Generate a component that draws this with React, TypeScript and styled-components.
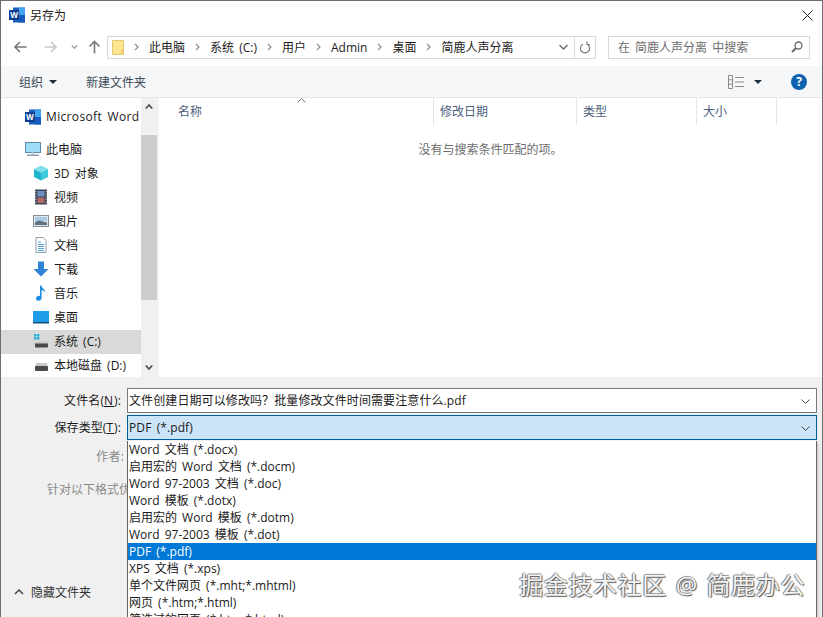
import React from "react";
import styled, { createGlobalStyle } from "styled-components";

const GlobalStyle = createGlobalStyle`
  html, body {
    margin: 0;
    padding: 0;
    background: #fff;
  }
  body {
    font-family: "Open Sans", "Noto Sans CJK SC", sans-serif;
    font-size: 12px;
    color: #1a1a1a;
    word-spacing: 2px;
  }
`;

const Dialog = styled.div`
  position: relative;
  box-sizing: border-box;
  width: 823px;
  height: 617px;
  overflow: hidden;
  display: flex;
  flex-direction: column;
  background: #fff;
  border: solid #6e6e6e;
  border-width: 1px 1px 0 1px;
`;

const TitleBar = styled.div`
  height: 28px;
  flex: none;
  display: flex;
  align-items: center;
  padding: 0 8px;
  gap: 5px;
`;

const TitleText = styled.span`
  flex: 1;
  font-size: 12px;
`;

const CloseButton = styled.svg`
  width: 11px;
  height: 11px;
  margin-right: 1px;
  stroke: #222;
  stroke-width: 1;
  fill: none;
`;

const NavBar = styled.div`
  height: 36px;
  flex: none;
  display: flex;
  align-items: center;
  padding-left: 13px;
`;

const NavIcon = styled.svg<{ $w: number; $gap: number }>`
  width: ${(p) => p.$w}px;
  height: 14px;
  margin-right: ${(p) => p.$gap}px;
  fill: none;
  flex: none;
`;

const AddressBox = styled.div`
  box-sizing: border-box;
  width: 468px;
  height: 23px;
  border: 1px solid #d9d9d9;
  display: flex;
  align-items: center;
  padding-left: 4px;
  flex: none;
`;

const FolderIcon = styled.svg`
  width: 12px;
  height: 15px;
  flex: none;
`;

const Crumb = styled.span`
  font-size: 12px;
  color: #1a1a1a;
  white-space: nowrap;
`;

const CrumbArrow = styled.svg`
  width: 5px;
  height: 8px;
  margin: 0 10px;
  stroke: #8a8a8a;
  stroke-width: 1.2;
  fill: none;
  flex: none;
`;

const AddressEnd = styled.div`
  margin-left: auto;
  margin-right: 6px;
  display: flex;
  align-items: center;
  height: 100%;
`;

const RefreshBox = styled.div`
  box-sizing: border-box;
  width: 21px;
  height: 23px;
  border: 1px solid #d9d9d9;
  border-left: none;
  display: flex;
  align-items: center;
  justify-content: center;
  flex: none;
`;

const SearchBox = styled.div`
  box-sizing: border-box;
  width: 202px;
  height: 23px;
  margin-left: 12px;
  border: 1px solid #d9d9d9;
  display: flex;
  align-items: center;
  justify-content: space-between;
  padding: 0 6px 0 9px;
  color: #6d6d6d;
  font-size: 12px;
  flex: none;
`;

const CommandBar = styled.div`
  height: 32px;
  margin-top: 1px;
  flex: none;
  box-sizing: border-box;
  background: #f5f6f7;
  border-bottom: 1px solid #e6e6e6;
  display: flex;
  align-items: center;
  padding: 0 15px 0 18px;
  color: #3c4a58;
`;

const CommandItem = styled.span`
  display: inline-flex;
  align-items: center;
  gap: 6px;
  margin-right: 29px;
`;

const Caret = styled.span`
  width: 0;
  height: 0;
  border-left: 4px solid transparent;
  border-right: 4px solid transparent;
  border-top: 4px solid #1f3040;
`;

const CommandEnd = styled.div`
  margin-left: auto;
  display: flex;
  align-items: center;
  gap: 10px;
`;

const HelpBadge = styled.span`
  width: 16px;
  height: 16px;
  margin-left: 19px;
  border-radius: 50%;
  background: #0f62b0;
  color: #fff;
  font-weight: 700;
  font-size: 12px;
  display: flex;
  align-items: center;
  justify-content: center;
`;

const Browser = styled.div`
  height: 279px;
  flex: none;
  display: flex;
`;

const Sidebar = styled.div`
  width: 140px;
  flex: none;
  overflow: hidden;
  padding-top: 8px;
`;

const NavRow = styled.div<{ $indent: number; $selected?: boolean; $mb?: number; $latin?: boolean }>`
  box-sizing: border-box;
  height: 24px;
  display: flex;
  align-items: center;
  gap: 5px;
  padding-left: ${(p) => p.$indent}px;
  padding-bottom: 3px;
  margin-bottom: ${(p) => p.$mb ?? 0}px;
  background: ${(p) => (p.$selected ? "#d9d9d9" : "transparent")};
  white-space: nowrap;
  font-size: 12px;
  letter-spacing: ${(p) => (p.$latin ? "0.35px" : "0")};
`;

const RowIcon = styled.svg`
  width: 16px;
  height: 16px;
  flex: none;
`;

const ScrollTrack = styled.div`
  width: 16px;
  flex: none;
  background: #f0f0f0;
  display: flex;
  flex-direction: column;
  align-items: center;
  padding-bottom: 1px;
`;

const ScrollArrow = styled.svg`
  width: 16px;
  height: 17px;
  padding: 5px 4px;
  box-sizing: border-box;
  stroke: #505050;
  stroke-width: 1.8;
  fill: none;
  flex: none;
`;

const ScrollThumb = styled.div`
  width: 16px;
  height: 165px;
  margin-top: 20px;
  background: #cdcdcd;
`;

const ScrollSpacer = styled.div`
  flex: 1;
`;

const FileList = styled.div`
  flex: 1;
  min-width: 0;
  position: relative;
  border-left: 2px solid #f3f3f3;
`;

const ColumnHeaders = styled.div`
  display: flex;
  height: 27px;
`;

const Column = styled.div<{ $w: number }>`
  box-sizing: border-box;
  width: ${(p) => p.$w}px;
  flex: none;
  border-right: 1px solid #e5e5e5;
  padding: 4px 0 0 6px;
  color: #4c607a;
  font-size: 12px;
`;

const NameColumn = styled(Column)`
  padding-left: 19px;
`;

const SortMark = styled.svg`
  position: absolute;
  left: 138px;
  top: 0;
  width: 9px;
  height: 5px;
  stroke: #777;
  stroke-width: 1;
  fill: none;
`;

const EmptyNote = styled.div`
  margin-top: 15px;
  text-align: center;
  color: #6d6d6d;
  font-size: 12px;
`;

const BottomPanel = styled.div`
  flex: 1;
  background: #f0f0f0;
  position: relative;
  padding-top: 11px;
`;

const FormRow = styled.div<{ $h: number }>`
  height: ${(p) => p.$h}px;
  display: flex;
  align-items: flex-start;
`;

const FieldLabel = styled.div<{ $muted?: boolean }>`
  box-sizing: border-box;
  width: 126px;
  flex: none;
  padding-top: 1px;
  padding-right: ${(p) => (p.$muted ? 3 : 6)}px;
  text-align: right;
  white-space: nowrap;
  font-size: 12px;
  letter-spacing: ${(p) => (p.$muted ? 0.2 : 0.1)}px;
  color: ${(p) => (p.$muted ? "#8a8a8a" : "#1a1a1a")};
  line-height: 24px;
  overflow: hidden;
`;

const Underlined = styled.span`
  text-decoration: underline;
  letter-spacing: 1px;
`;

const ComboField = styled.div<{ $active?: boolean }>`
  box-sizing: border-box;
  width: 690px;
  height: 25px;
  border: 1px solid ${(p) => (p.$active ? "#005a9e" : "#7a7a7a")};
  background: ${(p) => (p.$active ? "#cce4f7" : "#fff")};
  display: flex;
  align-items: center;
  justify-content: space-between;
  padding: 0 6px 1px 1px;
  font-size: 12px;
  letter-spacing: 0.1px;
  color: #1a1a1a;
`;

const ComboArrow = styled.svg`
  width: 9px;
  height: 5px;
  margin-top: 2px;
  stroke: #444;
  stroke-width: 1;
  fill: none;
`;

const OffsetLabel = styled.div`
  box-sizing: border-box;
  width: 126px;
  padding-left: 46px;
  white-space: nowrap;
  overflow: hidden;
  color: #8a8a8a;
  font-size: 12px;
  line-height: 22px;
`;

const HideFolders = styled.div`
  position: absolute;
  left: 13px;
  top: 206px;
  display: flex;
  align-items: center;
  gap: 7px;
  color: #333;
  font-size: 12px;
`;

const TypeMenu = styled.div`
  position: absolute;
  left: 126px;
  top: 64px;
  box-sizing: border-box;
  width: 690px;
  height: 190px;
  background: #fff;
  border-left: 1px solid #646464;
  border-right: 1px solid #646464;
  box-shadow: 2px 2px 2px rgba(0, 0, 0, 0.12);
`;

const MenuItem = styled.div<{ $selected?: boolean }>`
  height: 17px;
  line-height: 17px;
  padding-left: 1px;
  white-space: nowrap;
  font-size: 12px;
  background: ${(p) => (p.$selected ? "#0078d7" : "transparent")};
  color: ${(p) => (p.$selected ? "#fff" : "#1a1a1a")};
`;

const Watermark = styled.div`
  position: absolute;
  right: 17px;
  top: 565px;
  font-size: 24px;
  letter-spacing: 0.6px;
  word-spacing: 2px;
  color: #f4f4f4;
  white-space: nowrap;
  text-shadow: 1px 1px 1px #555, -1px 0 1px #777, 0 -1px 1px #999;
`;

const WordIcon = () => (
  <RowIcon viewBox="0 0 16 16">
    <rect x="4" y="0.5" width="12" height="15" fill="#1b5ebe" />
    <rect x="10" y="0.5" width="6" height="7.5" fill="#41a5ee" />
    <rect x="10" y="8" width="6" height="7.5" fill="#185abd" />
    <rect x="0" y="3" width="10" height="10" fill="#103f91" />
    <text x="5" y="11" fontSize="8" fontWeight="700" textAnchor="middle" fill="#fff" fontFamily="Open Sans">
      W
    </text>
  </RowIcon>
);

const PcIcon = () => (
  <RowIcon viewBox="0 0 16 16">
    <rect x="0.5" y="1.5" width="15" height="10" fill="#9fdcf8" stroke="#5b8aa8" />
    <rect x="6.5" y="11.5" width="3" height="2" fill="#c3d3dd" />
    <rect x="2" y="13.5" width="12" height="1.5" fill="#8aa0b0" />
  </RowIcon>
);

const CubeIcon = () => (
  <RowIcon viewBox="0 0 16 16">
    <path d="M8 0.5 15 4 8 7.5 1 4z" fill="#7fe0ea" />
    <path d="M1 4 8 7.5V15.5L1 12z" fill="#1fb5cc" />
    <path d="M15 4 8 7.5V15.5L15 12z" fill="#3cc7dc" />
  </RowIcon>
);

const VideoIcon = () => (
  <RowIcon viewBox="0 0 16 16">
    <rect x="2" y="0.5" width="12" height="15" fill="#3d4650" />
    <rect x="4.5" y="2" width="7" height="5.5" fill="#6c8fc4" />
    <rect x="4.5" y="8.5" width="7" height="5.5" fill="#b06a6a" />
    <path d="M2.8 2v12M13.2 2v12" stroke="#dde" strokeDasharray="1.2 1.4" />
  </RowIcon>
);

const PictureIcon = () => (
  <RowIcon viewBox="0 0 16 16">
    <rect x="0.5" y="2.5" width="15" height="11" fill="#dfe7ee" stroke="#8c8c8c" />
    <rect x="2" y="4" width="12" height="4" fill="#a8cbe6" />
    <path d="M2 12V9l4-1.5 8 2V12z" fill="#60727f" />
  </RowIcon>
);

const DocIcon = () => (
  <RowIcon viewBox="0 0 16 16">
    <path d="M3 0.5h7l3 3v12H3z" fill="#fff" stroke="#8fa0ad" />
    <path d="M5 5h3M5 7.5h6M5 9.5h6M5 11.5h6M5 13.5h6" stroke="#56a3d4" />
  </RowIcon>
);

const DownloadIcon = () => (
  <RowIcon viewBox="0 0 16 16">
    <path d="M5 0.5h6V8h4.5L8 15.5 0.5 8H5z" fill="#2f83d8" />
  </RowIcon>
);

const MusicIcon = () => (
  <RowIcon viewBox="0 0 16 16">
    <path d="M7 0.5h1.4c.3 2.6 3.8 3.6 3.8 7-1-1.7-2.4-2.4-3.6-2.6V13c0 1.7-1.6 2.7-3.1 2.7S3 14.8 3 13.4s1.6-2.6 3-2.6c.4 0 .7 0 1 .2z" fill="#1e8fe0" />
  </RowIcon>
);

const DesktopIcon = () => (
  <RowIcon viewBox="0 0 16 16">
    <rect x="0" y="2" width="16" height="12" fill="#1f9be8" />
    <rect x="0" y="13" width="16" height="1.5" fill="#10507e" />
  </RowIcon>
);

const SystemDriveIcon = () => (
  <RowIcon viewBox="0 0 16 16">
    <path d="M1 1h2.4v2.4H1zM4 1h2.4v2.4H4zM1 4h2.4v2.4H1zM4 4h2.4v2.4H4z" fill="#27b3d8" />
    <rect x="2" y="10" width="13" height="4.5" rx="1" fill="#4a4a4a" />
    <rect x="3" y="8.5" width="11" height="2" fill="#c9c9c9" />
  </RowIcon>
);

const DriveIcon = () => (
  <RowIcon viewBox="0 0 16 16">
    <rect x="2" y="9" width="13" height="5" rx="1" fill="#4a4a4a" />
    <path d="M3.5 6h10l1.5 3H2z" fill="#c9c9c9" />
  </RowIcon>
);

const navRows = [
  { label: "3D 对象", icon: <CubeIcon /> },
  { label: "视频", icon: <VideoIcon /> },
  { label: "图片", icon: <PictureIcon /> },
  { label: "文档", icon: <DocIcon /> },
  { label: "下载", icon: <DownloadIcon /> },
  { label: "音乐", icon: <MusicIcon /> },
  { label: "桌面", icon: <DesktopIcon /> },
  { label: "系统 (C:)", icon: <SystemDriveIcon />, selected: true },
  { label: "本地磁盘 (D:)", icon: <DriveIcon /> },
];

const crumbs = ["此电脑", "系统 (C:)", "用户", "Admin", "桌面", "简鹿人声分离"];

const fileTypes = [
  "Word 文档 (*.docx)",
  "启用宏的 Word 文档 (*.docm)",
  "Word 97-2003 文档 (*.doc)",
  "Word 模板 (*.dotx)",
  "启用宏的 Word 模板 (*.dotm)",
  "Word 97-2003 模板 (*.dot)",
  "PDF (*.pdf)",
  "XPS 文档 (*.xps)",
  "单个文件网页 (*.mht;*.mhtml)",
  "网页 (*.htm;*.html)",
  "筛选过的网页 (*.htm;*.html)",
];

const ChevronDown = () => (
  <ComboArrow viewBox="0 0 9 5">
    <path d="M0.5 0.5 4.5 4.5 8.5 0.5" />
  </ComboArrow>
);

const App = () => {
  return (
    <>
      <GlobalStyle />
      <Dialog>
        <TitleBar>
          <WordIcon />
          <TitleText>另存为</TitleText>
          <CloseButton viewBox="0 0 11 11">
            <path d="M0.5 0.5 10.5 10.5M10.5 0.5 0.5 10.5" />
          </CloseButton>
        </TitleBar>

        <NavBar>
          <NavIcon $w={13} $gap={17} viewBox="0 0 13 14" stroke="#7a7a7a" strokeWidth="1.6">
            <path d="M12.5 7H1M6 2 1 7l5 5" />
          </NavIcon>
          <NavIcon $w={13} $gap={14} viewBox="0 0 13 14" stroke="#c8c8c8" strokeWidth="1.6">
            <path d="M0.5 7H12M7 2l5 5-5 5" />
          </NavIcon>
          <NavIcon $w={7} $gap={10} viewBox="0 0 7 14" stroke="#a0a0a0" strokeWidth="1.4">
            <path d="M0.8 5.5 3.5 8.2 6.2 5.5" />
          </NavIcon>
          <NavIcon $w={13} $gap={6} viewBox="0 0 13 14" stroke="#7a7a7a" strokeWidth="1.6">
            <path d="M6.5 13.5V1.5M1.5 6.5l5-5 5 5" />
          </NavIcon>
          <AddressBox>
            <FolderIcon viewBox="0 0 12 15">
              <path d="M0.5 0.5h11v14H0.5z" fill="#fde68f" stroke="#e2c770" />
              <rect x="9" y="9" width="2.5" height="5.5" fill="#f0cf70" />
            </FolderIcon>
            <CrumbArrow viewBox="0 0 5 8">
              <path d="M1 0.8 4 4 1 7.2" />
            </CrumbArrow>
            {crumbs.map((crumb, i) => (
              <React.Fragment key={crumb}>
                <Crumb>{crumb}</Crumb>
                {i < crumbs.length - 1 && (
                  <CrumbArrow viewBox="0 0 5 8">
                    <path d="M1 0.8 4 4 1 7.2" />
                  </CrumbArrow>
                )}
              </React.Fragment>
            ))}
            <AddressEnd>
              <svg width="9" height="6" viewBox="0 0 9 6" fill="none" stroke="#666" strokeWidth="1.3">
                <path d="M0.5 1 4.5 5 8.5 1" />
              </svg>
            </AddressEnd>
          </AddressBox>
          <RefreshBox>
            <svg width="11" height="13" viewBox="0 0 11 13" fill="none" stroke="#777" strokeWidth="1.2">
              <path d="M3 3.2a4.6 4.6 0 1 0 4 0M7 0.5v3h3" />
            </svg>
          </RefreshBox>
          <SearchBox>
            <span>在 简鹿人声分离 中搜索</span>
            <svg width="12" height="12" viewBox="0 0 12 12" fill="none" stroke="#666">
              <circle cx="7.5" cy="4.5" r="3.5" strokeWidth="1.3" />
              <path d="M5 7 1 11" strokeWidth="2" />
            </svg>
          </SearchBox>
        </NavBar>

        <CommandBar>
          <CommandItem>
            组织 <Caret />
          </CommandItem>
          <CommandItem>新建文件夹</CommandItem>
          <CommandEnd>
            <svg width="16" height="14" viewBox="0 0 16 14" fill="none" stroke="#8a8a8a">
              <path d="M0.5 0.5h4v13h-4zM0.5 4.8h4M0.5 9.2h4M7 2.5h9M7 7h9M7 11.5h9" />
            </svg>
            <Caret />
            <HelpBadge>?</HelpBadge>
          </CommandEnd>
        </CommandBar>

        <Browser>
          <Sidebar>
            <NavRow $indent={24} $mb={8} $latin>
              <WordIcon />
              Microsoft Word
            </NavRow>
            <NavRow $indent={24}>
              <PcIcon />
              此电脑
            </NavRow>
            {navRows.map((row) => (
              <NavRow key={row.label} $indent={32} $selected={row.selected}>
                {row.icon}
                {row.label}
              </NavRow>
            ))}
          </Sidebar>
          <ScrollTrack>
            <ScrollArrow viewBox="0 0 8 7">
              <path d="M0.8 5.5 4 2 7.2 5.5" />
            </ScrollArrow>
            <ScrollThumb />
            <ScrollSpacer />
            <ScrollArrow viewBox="0 0 8 7">
              <path d="M0.8 1.5 4 5 7.2 1.5" />
            </ScrollArrow>
          </ScrollTrack>
          <FileList>
            <SortMark viewBox="0 0 9 5">
              <path d="M0.5 4.5 4.5 0.5 8.5 4.5" />
            </SortMark>
            <ColumnHeaders>
              <NameColumn $w={275}>名称</NameColumn>
              <Column $w={143}>修改日期</Column>
              <Column $w={120}>类型</Column>
              <Column $w={80}>大小</Column>
            </ColumnHeaders>
            <EmptyNote>没有与搜索条件匹配的项。</EmptyNote>
          </FileList>
        </Browser>

        <BottomPanel>
          <FormRow $h={27}>
            <FieldLabel>
              文件名(<Underlined>N</Underlined>):
            </FieldLabel>
            <ComboField>
              文件创建日期可以修改吗？批量修改文件时间需要注意什么.pdf
              <ChevronDown />
            </ComboField>
          </FormRow>
          <FormRow $h={29}>
            <FieldLabel>
              保存类型(<Underlined>T</Underlined>):
            </FieldLabel>
            <ComboField $active>
              PDF (*.pdf)
              <ChevronDown />
            </ComboField>
          </FormRow>
          <FormRow $h={35}>
            <FieldLabel $muted>作者:</FieldLabel>
          </FormRow>
          <FormRow $h={24}>
            <OffsetLabel>针对以下格式优化:</OffsetLabel>
          </FormRow>
          <HideFolders>
            <svg width="10" height="6" viewBox="0 0 10 6" fill="none" stroke="#444" strokeWidth="1.5">
              <path d="M1 5 5 1 9 5" />
            </svg>
            隐藏文件夹
          </HideFolders>
          <TypeMenu>
            {fileTypes.map((type) => (
              <MenuItem key={type} $selected={type === "PDF (*.pdf)"}>
                {type}
              </MenuItem>
            ))}
          </TypeMenu>
        </BottomPanel>

        <Watermark>掘金技术社区 @ 简鹿办公</Watermark>
      </Dialog>
    </>
  );
};

export default App;
